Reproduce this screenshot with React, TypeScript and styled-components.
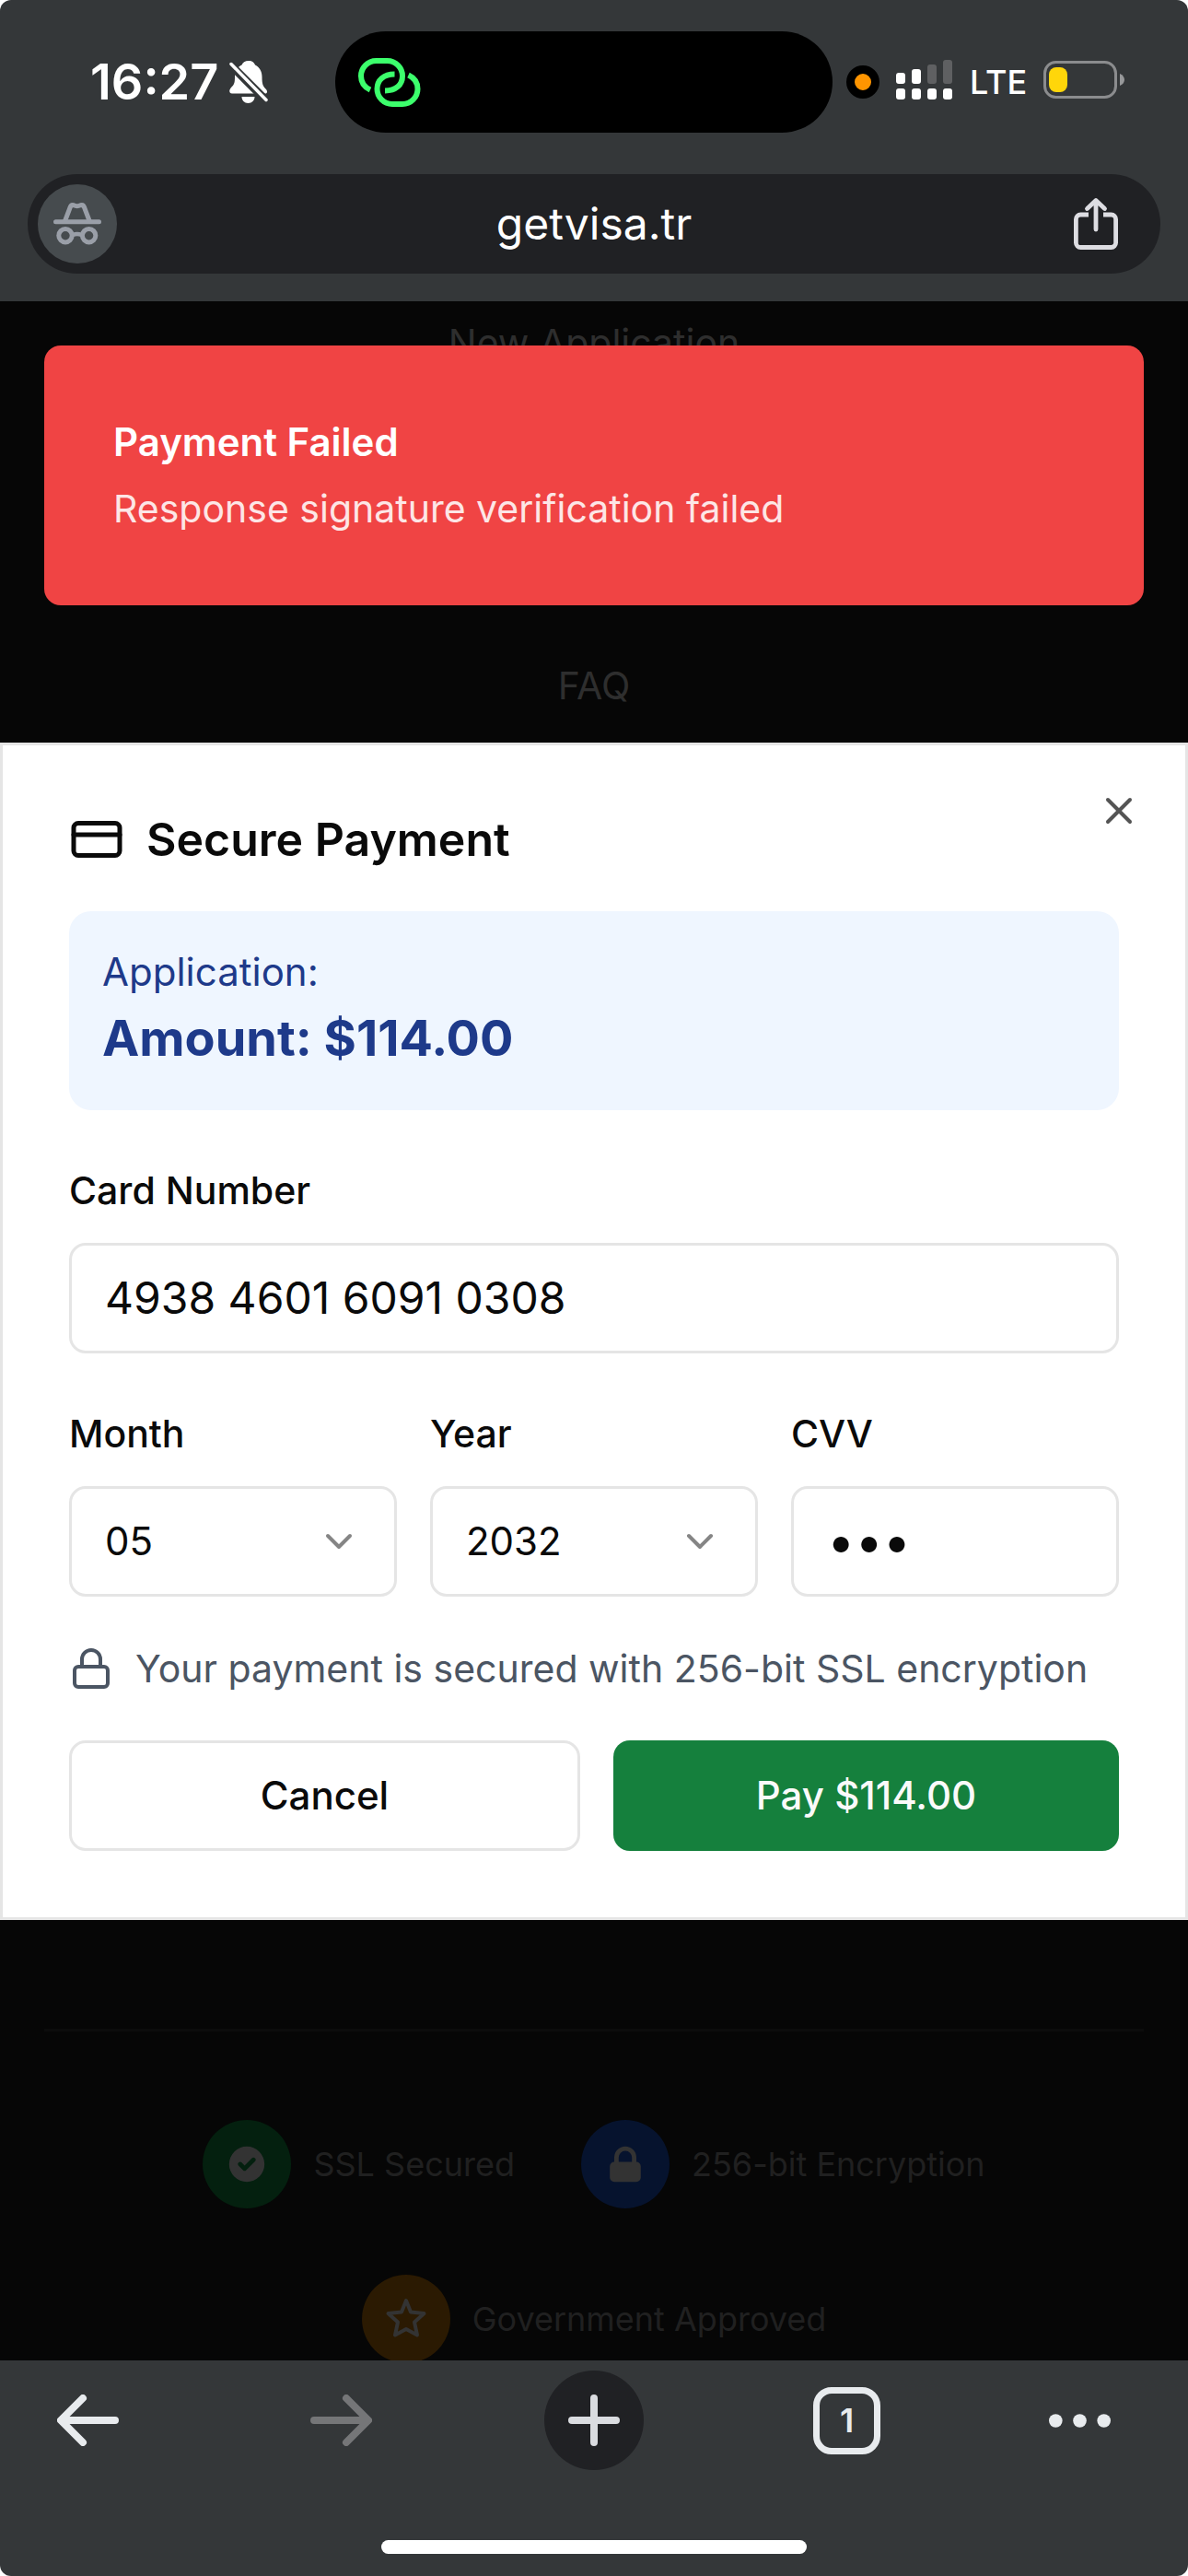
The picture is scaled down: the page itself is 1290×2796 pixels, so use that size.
import React, { useState } from "react";
import styled, { createGlobalStyle } from "styled-components";
import { ChevronDown, CreditCard, Lock, X } from "lucide-react";
import { HiCheckCircle, HiLockClosed } from "react-icons/hi";

const GlobalStyle = createGlobalStyle`
  *, *::before, *::after { box-sizing: border-box; }
  body {
    margin: 0;
    background: #ffffff;
    font-family: Inter, "Liberation Sans", sans-serif;
  }
  button, input, select { font: inherit; color: inherit; margin: 0; }
  svg { display: block; flex: none; }
`;

const Phone = styled.div`
  display: flex;
  flex-direction: column;
  height: 100vh;
  border-radius: 12px;
  overflow: hidden;
  background: #343739;
`;

/* ---------- status bar and address bar ---------- */

const TopChrome = styled.header`
  flex: none;
  padding: 34px 0 30px;
`;

const StatusBar = styled.div`
  display: grid;
  grid-template-columns: 1fr 540px 1fr;
  align-items: center;
  padding-right: 22px;
  color: #ffffff;
`;

const Clock = styled.div`
  display: flex;
  align-items: center;
  gap: 12px;
  padding-left: 98px;
  font-size: 54px;
  line-height: 60px;
  font-weight: 600;
`;

const Island = styled.div`
  display: flex;
  align-items: center;
  height: 110px;
  padding-left: 25px;
  border-radius: 55px;
  background: #000000;
`;

const StatusIcons = styled.div`
  display: flex;
  align-items: center;
  gap: 18px;
  padding-left: 15px;
`;

const RecordingDot = styled.span`
  width: 36px;
  height: 36px;
  flex: none;
  border: 9px solid #000000;
  border-radius: 50%;
  background: #ff9500;
`;

const Network = styled.span`
  font-size: 36px;
  line-height: 60px;
  font-weight: 500;
`;

const AddressBar = styled.div`
  display: grid;
  grid-template-columns: 118px 1fr 118px;
  align-items: center;
  height: 108px;
  margin: 45px 30px 0;
  padding: 0 11px;
  border-radius: 54px;
  background: #202124;
`;

const ChromeButton = styled.button`
  display: flex;
  align-items: center;
  justify-content: center;
  padding: 0;
  border: 0;
  background: none;
`;

const IncognitoButton = styled(ChromeButton)`
  width: 86px;
  height: 86px;
  border-radius: 50%;
  background: #464b4e;
`;

const Address = styled(ChromeButton)`
  color: #ffffff;
  font-size: 48px;
  line-height: 60px;
`;

/* ---------- page ---------- */

const Viewport = styled.main`
  position: relative;
  flex: 1;
  min-height: 0;
  overflow: hidden;
  background: #060606;
`;

const Page = styled.div`
  display: flex;
  flex-direction: column;
  padding: 15px 48px 0;
`;

const SiteNav = styled.nav`
  display: flex;
  flex-direction: column;
  align-items: center;
  gap: 312px;
`;

const SiteLink = styled.a`
  color: #2e2e2e;
  font-size: 41px;
  line-height: 60px;
  text-decoration: none;
`;

const Badges = styled.ul`
  display: flex;
  flex-wrap: wrap;
  justify-content: center;
  gap: 72px;
  margin: 1428px 0 0;
  padding: 96px 0 0;
  border-top: 3px solid #0c0c0c;
  list-style: none;
`;

const Badge = styled.li`
  display: flex;
  align-items: center;
  gap: 24px;
  color: #202020;
  font-size: 36px;
  line-height: 48px;
`;

const BadgeIcon = styled.span<{ $tone: string }>`
  display: flex;
  align-items: center;
  justify-content: center;
  width: 96px;
  height: 96px;
  border-radius: 50%;
  background: ${(p) => p.$tone};
  color: #333333;
`;

const Toast = styled.div`
  position: absolute;
  top: 48px;
  left: 48px;
  right: 48px;
  display: flex;
  flex-direction: column;
  gap: 12px;
  padding: 75px;
  border-radius: 18px;
  background: #f04444;
  line-height: 60px;
`;

const ToastTitle = styled.strong`
  color: #ffffff;
  font-size: 42px;
  font-weight: 600;
`;

const ToastText = styled.span`
  color: #fde6e6;
  font-size: 41px;
`;

/* ---------- payment dialog ---------- */

const Overlay = styled.div`
  position: absolute;
  inset: 0;
  display: flex;
  align-items: center;
`;

const Dialog = styled.section`
  position: relative;
  display: flex;
  flex-direction: column;
  gap: 48px;
  width: 100%;
  padding: 72px;
  border: 3px solid #e5e5e5;
  background: #ffffff;
  color: #0a0a0a;
`;

const CloseButton = styled.button`
  position: absolute;
  top: 47px;
  right: 48px;
  padding: 0;
  border: 0;
  background: none;
  color: #545454;
`;

const DialogTitle = styled.h2`
  display: flex;
  align-items: center;
  gap: 24px;
  margin: 0;
  font-size: 50px;
  line-height: 60px;
  font-weight: 600;
`;

const Summary = styled.div`
  padding: 36px;
  border-radius: 24px;
  background: #eff6ff;
  color: #1e3a8a;
`;

const SummaryLabel = styled.p`
  margin: 0;
  font-size: 42px;
  line-height: 60px;
`;

const SummaryAmount = styled.p`
  margin: 0;
  font-size: 54px;
  line-height: 84px;
  font-weight: 700;
`;

const FieldRow = styled.div`
  display: grid;
  grid-template-columns: repeat(3, 1fr);
  gap: 36px;
`;

const Field = styled.div`
  display: flex;
  flex-direction: column;
  gap: 18px;
  min-width: 0;
`;

const Label = styled.label`
  font-size: 41px;
  line-height: 78px;
  font-weight: 500;
`;

const TextInput = styled.input`
  width: 100%;
  height: 120px;
  padding: 0 36px;
  border: 3px solid #e5e5e5;
  border-radius: 18px;
  outline: 0;
  background: #ffffff;
  font-size: 48px;
`;

const SecretInput = styled(TextInput)`
  font-size: 54px;
`;

const SelectBox = styled.div`
  position: relative;
`;

const Select = styled.select`
  appearance: none;
  width: 100%;
  height: 120px;
  padding: 0 36px;
  border: 3px solid #e5e5e5;
  border-radius: 18px;
  background: #ffffff;
  font-size: 42px;
`;

const SelectArrow = styled(ChevronDown)`
  position: absolute;
  top: 36px;
  right: 39px;
  color: #858585;
  pointer-events: none;
`;

const SecureNote = styled.p`
  display: flex;
  align-items: center;
  gap: 24px;
  margin: 0;
  color: #4b5563;
  font-size: 41px;
  line-height: 60px;
`;

const Actions = styled.div`
  display: flex;
  gap: 36px;
`;

const ActionButton = styled.button<{ $primary?: boolean }>`
  flex: 1;
  height: 120px;
  padding: 0 48px;
  border: ${(p) => (p.$primary ? "0" : "3px solid #e5e5e5")};
  border-radius: 18px;
  background: ${(p) => (p.$primary ? "#15803d" : "#ffffff")};
  color: ${(p) => (p.$primary ? "#fafafa" : "#0a0a0a")};
  font-size: 42px;
  font-weight: 500;
`;

/* ---------- browser toolbar ---------- */

const BottomChrome = styled.footer`
  flex: none;
  display: flex;
  flex-direction: column;
  align-items: center;
  gap: 76px;
  padding: 11px 0 24px;
`;

const Toolbar = styled.nav`
  display: grid;
  grid-template-columns: 1fr 108px 1fr;
  align-items: center;
  width: 100%;
`;

const ToolbarSide = styled.div<{ $start: number; $end: number }>`
  display: flex;
  align-items: center;
  justify-content: space-between;
  padding: 0 ${(p) => p.$end}px 0 ${(p) => p.$start}px;
`;

const NewTabButton = styled(ChromeButton)`
  height: 108px;
  border-radius: 50%;
  background: #202124;
`;

const TabsButton = styled(ChromeButton)`
  width: 73px;
  height: 73px;
  border: 7px solid #e8ebee;
  border-radius: 20px;
  color: #e8ebee;
  font-size: 36px;
  line-height: 48px;
  font-weight: 600;
`;

const HomeIndicator = styled.div`
  width: 462px;
  height: 15px;
  border-radius: 8px;
  background: #ffffff;
`;

/* ---------- icons ---------- */

const BellOff = () => (
  <svg width="42" height="47" viewBox="0 0 42 47" aria-hidden="true">
    <path
      d="M21 0c4 0 6 2 7 4.500 5 2.500 7.500 7 7.500 13 0 8 1 10 4.500 13.500 1.500 1.500 1.500 4.500-1 4.500H3c-3.500 0-3.500-4-1-6.500C5.500 25.500 6 24 6 17c0-6 2.500-10 7.500-12.500C14.500 2 17 0 21 0zM13.500 39h14c0 4-3 7-7 7s-7-3-7-7z"
      fill="#ffffff"
    />
    <path d="M-1 2l43 43" stroke="#343739" strokeWidth="9" />
    <path d="M2 3.500l38 39" stroke="#ffffff" strokeWidth="3.500" strokeLinecap="round" />
  </svg>
);

const HotspotIcon = () => (
  <svg width="68" height="53" viewBox="0 0 68 53" fill="none" stroke="#3cff6c" strokeWidth="6" aria-hidden="true">
    <path d="M13 34.500C6.500 31.500 3 26 3 19.500A16.500 16.500 0 0 1 19.500 3H31.500A16.500 16.500 0 0 1 48 19.500C48 29 41 35.500 29 35.500" />
    <path d="M54.500 18.500C61 21.500 64.500 27 64.500 33.500A16.500 16.500 0 0 1 48 50H37A16.500 16.500 0 0 1 20.500 33.500C20.500 24 27.500 17.500 39.500 17.500" />
  </svg>
);

const SignalIcon = () => (
  <svg width="62" height="48" viewBox="0 0 62 48" fill="#ffffff" aria-hidden="true">
    <rect x="0" y="14" width="10" height="12" rx="3" />
    <rect x="17" y="10" width="10" height="16" rx="3" />
    <rect x="34" y="5" width="10" height="21" rx="3" fill="#5f6062" />
    <rect x="51" y="0" width="10" height="26" rx="3" fill="#5f6062" />
    <rect x="0" y="31" width="10" height="12" rx="3" />
    <rect x="17" y="31" width="10" height="12" rx="3" />
    <rect x="34" y="31" width="10" height="12" rx="3" />
    <rect x="51" y="31" width="10" height="12" rx="3" />
  </svg>
);

const BatteryIcon = () => (
  <svg width="88" height="47" viewBox="0 0 88 47" aria-hidden="true">
    <rect x="1.500" y="1.500" width="77" height="38" rx="12" fill="none" stroke="#8b8c8e" strokeWidth="3" />
    <rect x="6" y="7" width="20" height="27" rx="8" fill="#ffd60a" />
    <path d="M83 14c3.500 1.500 5 4 5 6.500s-1.500 5-5 6.500z" fill="#97989a" />
  </svg>
);

const IncognitoIcon = () => (
  <svg width="52" height="46" viewBox="0 0 52 46" fill="none" stroke="#9a9fa8" strokeWidth="5" strokeLinecap="round" strokeLinejoin="round" aria-hidden="true">
    <path d="M2.500 20.700H49.500" />
    <path d="M12.500 20L18 5.500C18.700 3 20 2.300 22 2.800Q25.700 4.500 29.500 2.800C31.500 2.300 33 3 33.700 5.500L39.200 20" />
    <circle cx="13" cy="35.700" r="7.200" />
    <circle cx="38.600" cy="35.700" r="7.200" />
    <path d="M21 35Q25.800 33 30.500 35" strokeWidth="4.500" />
  </svg>
);

const ShareIcon = () => (
  <svg width="48" height="58" viewBox="0 0 48 58" fill="none" stroke="#dddde2" strokeWidth="4.800" strokeLinecap="round" strokeLinejoin="round" aria-hidden="true">
    <path d="M16 19H7.400a5 5 0 0 0-5 5V49.500a5 5 0 0 0 5 5H40.600a5 5 0 0 0 5-5V24a5 5 0 0 0-5-5H32" strokeLinecap="butt" />
    <path d="M24 35V4M14.500 12.500L24 3.500L33.500 12.500" />
  </svg>
);

const StarIcon = () => (
  <svg width="48" height="48" viewBox="-1 0 48 48" fill="none" stroke="currentColor" strokeWidth="4" strokeLinejoin="round" aria-hidden="true">
    <path d="M23 4L28 16.500L42.500 18L32 27.500L35 41.500L23 35L11 41.500L14 27.500L3.500 18L18 16.500Z" />
  </svg>
);

const ArrowIcon = ({ color, flip }: { color: string; flip?: boolean }) => (
  <svg width="67" height="56" viewBox="0 0 67 56" fill="none" stroke={color} strokeWidth="8" strokeLinecap="round" strokeLinejoin="round" aria-hidden="true">
    <path d={flip ? "M4 28H62M39 4L63 28L39 52" : "M63 28H5M28 4L4 28L28 52"} />
  </svg>
);

const PlusIcon = () => (
  <svg width="56" height="56" viewBox="0 0 56 56" stroke="#dadce0" strokeWidth="8" strokeLinecap="round" aria-hidden="true">
    <path d="M28 4V52M4 28H52" />
  </svg>
);

const DotsIcon = () => (
  <svg width="67" height="15" viewBox="0 0 67 15" fill="#e8ebee" aria-hidden="true">
    <circle cx="7.300" cy="7.500" r="7.300" />
    <circle cx="33.500" cy="7.500" r="7.300" />
    <circle cx="59.700" cy="7.500" r="7.300" />
  </svg>
);

const MONTHS = ["01", "02", "03", "04", "05", "06", "07", "08", "09", "10", "11", "12"];
const YEARS = ["2025", "2026", "2027", "2028", "2029", "2030", "2031", "2032", "2033", "2034"];

export default function App() {
  const [card, setCard] = useState("4938 4601 6091 0308");
  const [month, setMonth] = useState("05");
  const [year, setYear] = useState("2032");
  const [cvv, setCvv] = useState("000");

  return (
    <>
      <GlobalStyle />
      <Phone>
        <TopChrome>
          <StatusBar>
            <Clock>
              16:27
              <BellOff />
            </Clock>
            <Island>
              <HotspotIcon />
            </Island>
            <StatusIcons>
              <RecordingDot />
              <SignalIcon />
              <Network>LTE</Network>
              <BatteryIcon />
            </StatusIcons>
          </StatusBar>
          <AddressBar>
            <IncognitoButton aria-label="Incognito">
              <IncognitoIcon />
            </IncognitoButton>
            <Address>getvisa.tr</Address>
            <ChromeButton aria-label="Share">
              <ShareIcon />
            </ChromeButton>
          </AddressBar>
        </TopChrome>

        <Viewport>
          <Page>
            <SiteNav>
              <SiteLink href="#new">New Application</SiteLink>
              <SiteLink href="#faq">FAQ</SiteLink>
            </SiteNav>
            <Badges>
              <Badge>
                <BadgeIcon $tone="#04200f">
                  <HiCheckCircle size={48} />
                </BadgeIcon>
                SSL Secured
              </Badge>
              <Badge>
                <BadgeIcon $tone="#06132e">
                  <HiLockClosed size={48} />
                </BadgeIcon>
                256-bit Encryption
              </Badge>
              <Badge>
                <BadgeIcon $tone="#2b1a02">
                  <StarIcon />
                </BadgeIcon>
                Government Approved
              </Badge>
            </Badges>
          </Page>

          <Overlay>
            <Dialog role="dialog" aria-labelledby="pay-title">
              <DialogTitle id="pay-title">
                <CreditCard size={60} />
                Secure Payment
              </DialogTitle>
              <Summary>
                <SummaryLabel>Application:</SummaryLabel>
                <SummaryAmount>Amount: $114.00</SummaryAmount>
              </Summary>
              <Field>
                <Label htmlFor="card">Card Number</Label>
                <TextInput id="card" inputMode="numeric" value={card} onChange={(e) => setCard(e.target.value)} />
              </Field>
              <FieldRow>
                <Field>
                  <Label htmlFor="month">Month</Label>
                  <SelectBox>
                    <Select id="month" value={month} onChange={(e) => setMonth(e.target.value)}>
                      {MONTHS.map((m) => (
                        <option key={m}>{m}</option>
                      ))}
                    </Select>
                    <SelectArrow size={48} />
                  </SelectBox>
                </Field>
                <Field>
                  <Label htmlFor="year">Year</Label>
                  <SelectBox>
                    <Select id="year" value={year} onChange={(e) => setYear(e.target.value)}>
                      {YEARS.map((y) => (
                        <option key={y}>{y}</option>
                      ))}
                    </Select>
                    <SelectArrow size={48} />
                  </SelectBox>
                </Field>
                <Field>
                  <Label htmlFor="cvv">CVV</Label>
                  <SecretInput id="cvv" type="password" value={cvv} onChange={(e) => setCvv(e.target.value)} />
                </Field>
              </FieldRow>
              <SecureNote>
                <Lock size={48} />
                Your payment is secured with 256-bit SSL encryption
              </SecureNote>
              <Actions>
                <ActionButton type="button">Cancel</ActionButton>
                <ActionButton type="button" $primary>
                  Pay $114.00
                </ActionButton>
              </Actions>
              <CloseButton type="button" aria-label="Close">
                <X size={48} />
              </CloseButton>
            </Dialog>
          </Overlay>

          <Toast role="alert">
            <ToastTitle>Payment Failed</ToastTitle>
            <ToastText>Response signature verification failed</ToastText>
          </Toast>
        </Viewport>

        <BottomChrome>
          <Toolbar aria-label="Browser">
            <ToolbarSide $start={62} $end={187}>
              <ChromeButton aria-label="Back">
                <ArrowIcon color="#e8ebee" />
              </ChromeButton>
              <ChromeButton aria-label="Forward" disabled>
                <ArrowIcon color="#757678" flip />
              </ChromeButton>
            </ToolbarSide>
            <NewTabButton aria-label="New tab">
              <PlusIcon />
            </NewTabButton>
            <ToolbarSide $start={184} $end={84}>
              <TabsButton aria-label="Open tabs">1</TabsButton>
              <ChromeButton aria-label="More">
                <DotsIcon />
              </ChromeButton>
            </ToolbarSide>
          </Toolbar>
          <HomeIndicator />
        </BottomChrome>
      </Phone>
    </>
  );
}
